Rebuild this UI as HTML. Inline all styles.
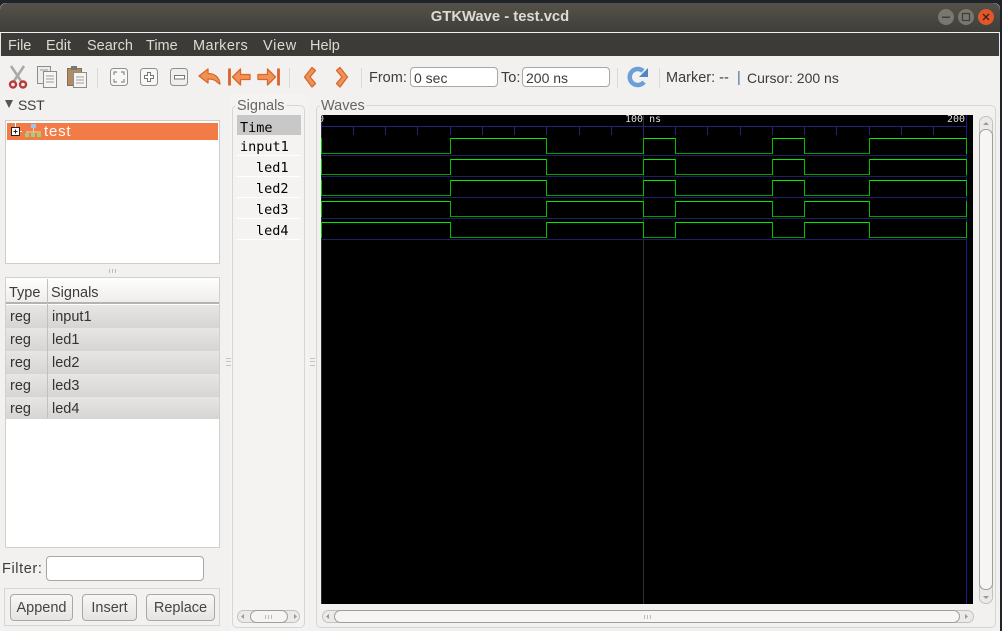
<!DOCTYPE html>
<html><head><meta charset="utf-8"><style>
html,body{margin:0;padding:0;background:#20232a;}
body{width:1002px;height:631px;overflow:hidden;position:relative;font-family:"Liberation Sans",sans-serif;font-size:14.5px;color:#3c3c3c;}
.a{position:absolute;box-sizing:border-box;}
.t{position:absolute;white-space:nowrap;line-height:18px;}
.m{font-family:"DejaVu Sans Mono","Liberation Mono",monospace;color:#000;font-size:13.5px;}
.menu{color:#dfdbd2;top:37px;font-size:14.5px;}
.frame{border:1px solid #d8d6d3;border-radius:5px;}
.entry{background:#fff;border:1px solid #a9a7a3;border-radius:4px;}
.btn{border:1px solid #aaa8a4;border-radius:4px;background:linear-gradient(#f8f7f6,#e6e4e1);text-align:center;line-height:26px;height:27px;top:594px;color:#444;}
.row{left:6px;width:213px;height:23px;background:linear-gradient(#e7e6e4,#d6d5d3);}
.cell{color:#333;font-size:14.5px;}
.h3{border-top:1px solid #c4c4c4;border-bottom:1px solid #c4c4c4;}
</style></head><body>
<div class="a" style="left:0;top:3px;width:1000px;height:628px;background:#f2f1f0;border-radius:6px 6px 0 0;"></div>
<div class="a" style="left:0;top:3px;width:1000px;height:30px;background:linear-gradient(#55524a,#3f3e39);border-radius:7px 7px 0 0;border-bottom:1px solid #f0f0f0;"></div>
<div class="t" style="left:420px;top:8px;color:#dfdbd2;font-weight:bold;font-size:14.8px;width:160px;text-align:center;">GTKWave - test.vcd</div>
<svg class="a" style="left:930px;top:6px" width="70" height="22">
<circle cx="16" cy="11" r="8" fill="#79776f"/><rect x="12" y="10.5" width="8" height="1.5" fill="#3f3e39"/>
<circle cx="36" cy="11" r="8" fill="#79776f"/><rect x="32.5" y="7.5" width="7" height="7" fill="none" stroke="#3f3e39" stroke-width="1.2"/>
<circle cx="56" cy="11" r="8" fill="#e2572a"/><path d="M53 8l6 6M59 8l-6 6" stroke="#402015" stroke-width="1.3"/>
</svg>
<div class="a" style="left:0;top:33px;width:1000px;height:23px;background:#3c3b37;border-left:1px solid #e8e8e8;border-right:1px solid #e8e8e8;"></div>
<span class="t menu" style="left:8px">File</span><span class="t menu" style="left:46px">Edit</span><span class="t menu" style="left:87px">Search</span><span class="t menu" style="left:146px">Time</span><span class="t menu" style="left:193px;letter-spacing:.4px">Markers</span><span class="t menu" style="left:263px;letter-spacing:.7px">View</span><span class="t menu" style="left:310px">Help</span>

<svg class="a" style="left:0;top:60px" width="370" height="35" fill="none">
<path d="M11 6l10 15M24 6l-10 15" stroke="#a9a9a7" stroke-width="2.6"/>
<circle cx="13" cy="24.500" r="3" stroke="#b93a3a" stroke-width="2.4"/><circle cx="23" cy="24.500" r="3" stroke="#b93a3a" stroke-width="2.4"/>
<rect x="37.500" y="6.500" width="13" height="17" fill="#ececeb" stroke="#8c8c8a"/><rect x="43.500" y="11.500" width="13" height="16" fill="#f4f4f3" stroke="#8c8c8a"/>
<path d="M46 16h8M46 19h8M46 22h8M40 10h8" stroke="#9b9b99"/>
<rect x="67.500" y="8.500" width="14" height="17" fill="#b08c63" stroke="#8a6c4a"/><rect x="71" y="6" width="6" height="4" fill="#777"/>
<rect x="73.500" y="12.500" width="13" height="15" fill="#f4f4f3" stroke="#8c8c8a"/><path d="M76 17h8M76 20h8M76 23h8" stroke="#9b9b99"/>
<path d="M97.500 8v20" stroke="#dcdad7"/>
<rect x="110.500" y="8.500" width="17" height="17" rx="3" fill="#f7f7f6" stroke="#8f8f8d"/>
<path d="M114 15v-3h3M124 15v-3h-3M114 19v3h3M124 19v3h-3" stroke="#8b8b89" stroke-width="1.200"/>
<rect x="140.500" y="8.500" width="17" height="17" rx="3" fill="#f7f7f6" stroke="#8f8f8d"/>
<path d="M147.500 12.500h3v3h3v3h-3v3h-3v-3h-3v-3h3z" fill="#fff" stroke="#777"/>
<rect x="170.500" y="8.500" width="17" height="17" rx="3" fill="#efefee" stroke="#8f8f8d"/>
<rect x="174.500" y="15.500" width="10" height="3.500" fill="#fff" stroke="#777"/>
<path d="M199 16l9-7v4.500c6 0 11 3 12 10.500-2-1-4-3-4-3-2-1.500-4-2-8-2v4z" fill="#ee9355" stroke="#d9662a" stroke-width="1.300" stroke-linejoin="round"/>
<path d="M229.500 8.500v17" stroke="#d8642a" stroke-width="2.800"/><path d="M232.500 17l8-8v5.500h9.500v5h-9.500v5.500z" fill="#ee9355" stroke="#d9662a" stroke-width="1.300" stroke-linejoin="round"/>
<path d="M278.500 8.500v17" stroke="#d8642a" stroke-width="2.800"/><path d="M275.500 17l-8-8v5.500h-9.500v5h9.500v5.500z" fill="#ee9355" stroke="#d9662a" stroke-width="1.300" stroke-linejoin="round"/>
<path d="M289.500 8v20" stroke="#dcdad7"/>
<path d="M304.500 17L312 7.500l3.500 3L310 17l5.500 6.500-3.500 3.500z" fill="#ee9355" stroke="#d9662a" stroke-width="1.300" stroke-linejoin="round"/>
<path d="M347.500 17L340 7.500l-3.500 3L342 17l-5.500 6.500 3.500 3.500z" fill="#ee9355" stroke="#d9662a" stroke-width="1.300" stroke-linejoin="round"/>
<path d="M361.500 8v20" stroke="#dcdad7"/>
</svg>
<span class="t" style="left:369px;top:69px">From:</span>
<div class="a entry" style="left:410px;top:67px;width:88px;height:20px;"></div><span class="t" style="left:414px;top:69px;font-size:14px">0 sec</span>
<span class="t" style="left:501px;top:69px">To:</span>
<div class="a entry" style="left:522px;top:67px;width:88px;height:20px;"></div><span class="t" style="left:526px;top:69px;font-size:14px">200 ns</span>
<svg class="a" style="left:617px;top:60px" width="45" height="35" fill="none">
<path d="M.5 8v20" stroke="#dcdad7"/>
<path d="M27 22a8 8 0 1 1-1-11" stroke="#6a9fd8" stroke-width="4.500"/><path d="M31 8v9h-9z" fill="#4f86c6"/>
<path d="M42.500 8v20" stroke="#dcdad7"/>
</svg>
<span class="t" style="left:666px;top:69px">Marker: --</span>
<span class="t" style="left:737px;top:69px;color:#4f6f99">|</span>
<span class="t" style="left:747px;top:68.500px;font-size:14px">Cursor: 200 ns</span>

<svg class="a" style="left:5px;top:100px" width="9" height="9"><path d="M0 0h8l-4 8z" fill="#555"/></svg>
<span class="t" style="left:18px;top:96px;font-size:14px;letter-spacing:-.3px">SST</span>
<div class="a" style="left:5px;top:120px;width:215px;height:144px;background:#fff;border:1px solid #cfcdca;"></div>
<div class="a" style="left:7px;top:123px;width:211px;height:17px;background:#f27b46;"></div>
<svg class="a" style="left:9px;top:123px" width="36" height="17">
<rect x="2.500" y="4.500" width="8" height="8" fill="#fff" stroke="#222"/><path d="M4.500 8.500h4M6.500 6.500v4" stroke="#222"/>
<path d="M6.500 0v4M11 8.500h2" stroke="#fff"/>
<rect x="22" y="1" width="5" height="4" fill="#9cc4ea"/><path d="M17 9h15M24.500 5v4" stroke="#f7d0ba"/>
<rect x="16" y="10" width="4" height="4" fill="#9ad17a"/><rect x="22" y="10" width="4" height="4" fill="#9ad17a"/><rect x="28" y="10" width="4" height="4" fill="#9ad17a"/>
</svg>
<span class="t" style="left:44px;top:123px;color:#fff;font-size:15px;letter-spacing:.8px">test</span>
<div class="a" style="left:109px;top:269px;width:1px;height:4px;background:#bbb;"></div><div class="a" style="left:112px;top:269px;width:1px;height:4px;background:#bbb;"></div><div class="a" style="left:115px;top:269px;width:1px;height:4px;background:#bbb;"></div>

<div class="a" style="left:5px;top:277px;width:215px;height:271px;background:#fff;border:1px solid #d2d0cd;"></div>
<div class="a" style="left:6px;top:278px;width:213px;height:26px;background:linear-gradient(#fff,#eeedeb);border-bottom:2px solid #b5b3b0;"></div>
<div class="a" style="left:47px;top:279px;width:1px;height:139px;background:#c2c0bd;z-index:2;"></div>
<span class="t" style="left:9px;top:284px">Type</span><span class="t" style="left:51px;top:284px">Signals</span>
<div class="a row" style="top:305px"></div><div class="a row" style="top:328px"></div><div class="a row" style="top:351px"></div><div class="a row" style="top:374px"></div><div class="a row" style="top:397px;height:22px"></div>
<span class="t cell" style="left:10px;top:308px">reg</span><span class="t cell" style="left:52px;top:308px">input1</span>
<span class="t cell" style="left:10px;top:331px">reg</span><span class="t cell" style="left:52px;top:331px">led1</span>
<span class="t cell" style="left:10px;top:354px">reg</span><span class="t cell" style="left:52px;top:354px">led2</span>
<span class="t cell" style="left:10px;top:377px">reg</span><span class="t cell" style="left:52px;top:377px">led3</span>
<span class="t cell" style="left:10px;top:400px">reg</span><span class="t cell" style="left:52px;top:400px">led4</span>

<span class="t" style="left:2px;top:560px;letter-spacing:.6px">Filter:</span>
<div class="a entry" style="left:46px;top:556px;width:158px;height:25px;"></div>
<div class="a" style="left:4px;top:588px;width:216px;height:38px;border:1px solid #d8d6d3;"></div>
<div class="a btn" style="left:10px;width:63px;">Append</div>
<div class="a btn" style="left:82px;width:55px;">Insert</div>
<div class="a btn" style="left:146px;width:69px;">Replace</div>

<div class="a" style="left:230px;top:94px;width:78px;height:537px;background:#f4f3f2;"></div>
<div class="a frame" style="left:232px;top:105px;width:73px;height:523px;"></div>
<div class="a" style="left:236px;top:98px;width:50px;height:14px;background:#f4f3f2;"></div>
<span class="t" style="left:237px;top:97px;color:#666;">Signals</span>
<div class="a" style="left:237px;top:115px;width:64px;height:20px;background:#c8c8c8;"></div>
<span class="t m" style="left:240px;top:119px">Time</span>
<span class="t m" style="left:240px;top:138px">input1</span>
<span class="t m" style="left:256px;top:159px">led1</span>
<span class="t m" style="left:256px;top:180px">led2</span>
<span class="t m" style="left:256px;top:201px">led3</span>
<span class="t m" style="left:256px;top:222px">led4</span>
<div class="a" style="left:237px;top:155px;width:64px;height:1px;background:#fff;"></div><div class="a" style="left:237px;top:176px;width:64px;height:1px;background:#fff;"></div><div class="a" style="left:237px;top:197px;width:64px;height:1px;background:#fff;"></div><div class="a" style="left:237px;top:218px;width:64px;height:1px;background:#fff;"></div><div class="a" style="left:237px;top:239px;width:64px;height:1px;background:#fff;"></div>
<svg class="a" style="left:236px;top:609px" width="66" height="15" fill="none">
<rect x="1.500" y="1.500" width="62" height="12" rx="6" fill="#eceae8" stroke="#c4c2bf"/>
<rect x="14.500" y="1.500" width="37" height="12" rx="6" fill="#f5f4f3" stroke="#a09e9b"/>
<path d="M8 5v5l-3-2.500zM58 5v5l3-2.500z" fill="#999"/><path d="M29.500 6v4M32.500 6v4M35.500 6v4" stroke="#bbb"/>
</svg>
<div class="a h3" style="left:226px;top:358px;width:5px;height:8px;"></div>
<div class="a" style="left:226px;top:361px;width:5px;height:1px;background:#c4c4c4;"></div>
<div class="a h3" style="left:310px;top:358px;width:5px;height:8px;"></div>
<div class="a" style="left:310px;top:361px;width:5px;height:1px;background:#c4c4c4;"></div>

<div class="a frame" style="left:316px;top:105px;width:680px;height:523px;"></div>
<div class="a" style="left:320px;top:98px;width:46px;height:14px;background:#f2f1f0;"></div>
<span class="t" style="left:321px;top:97px;color:#666;">Waves</span>

<svg class="a" style="left:321px;top:115px" width="652" height="489" viewBox="321 115 652 489" fill="none" shape-rendering="crispEdges">
<rect x="321" y="115" width="652" height="489" fill="#000"/>
<path d="M321.500 115v489M643.500 115v489" stroke="#2e2e3a"/>
<path d="M966.500 115v489" stroke="#1c1c8c"/>
<path d="M321 126.500h646" stroke="#24247e"/>
<path d="M353.500 127v8M385.500 127v8M417.500 127v8M450.500 127v8M482.500 127v8M514.500 127v8M546.500 127v8M579.500 127v8M611.500 127v8M643.500 127v8M675.500 127v8M707.500 127v8M740.500 127v8M772.500 127v8M804.500 127v8M836.500 127v8M869.500 127v8M901.500 127v8M933.500 127v8" stroke="#24247e"/>
<path d="M321 155.500h646M321 176.500h646M321 197.500h646M321 218.500h646M321 239.500h646" stroke="#1f1f66"/>
<g stroke="#00a000">
<path d="M321 153.500h129M547 153.500h96M676 153.500h96M805 153.500h64"/>
<path d="M321 174.500h129M547 174.500h96M676 174.500h96M805 174.500h64"/>
<path d="M321 195.500h129M547 195.500h96M676 195.500h96M805 195.500h64"/>
<path d="M451 216.500h95M644 216.500h31M773 216.500h31M870 216.500h97"/>
<path d="M451 237.500h95M644 237.500h31M773 237.500h31M870 237.500h97"/>
</g>
<g stroke="#00ec00">
<path d="M450 138.500h97M643 138.500h33M772 138.500h33M869 138.500h98"/>
<path d="M450 159.500h97M643 159.500h33M772 159.500h33M869 159.500h98"/>
<path d="M450 180.500h97M643 180.500h33M772 180.500h33M869 180.500h98"/>
<path d="M321 201.500h130M546 201.500h98M675 201.500h98M804 201.500h66"/>
<path d="M321 222.500h130M546 222.500h98M675 222.500h98M804 222.500h66"/>
</g>
<g stroke="#00c000">
<path d="M450.500 138v16M546.500 138v16M643.500 138v16M675.500 138v16M772.500 138v16M804.500 138v16M869.500 138v16M966.500 138v16M321.500 138v16"/>
<path d="M450.500 159v16M546.500 159v16M643.500 159v16M675.500 159v16M772.500 159v16M804.500 159v16M869.500 159v16M966.500 159v16M321.500 159v16"/>
<path d="M450.500 180v16M546.500 180v16M643.500 180v16M675.500 180v16M772.500 180v16M804.500 180v16M869.500 180v16M966.500 180v16M321.500 180v16"/>
<path d="M450.500 201v16M546.500 201v16M643.500 201v16M675.500 201v16M772.500 201v16M804.500 201v16M869.500 201v16M966.500 201v16M321.500 201v16"/>
<path d="M450.500 222v16M546.500 222v16M643.500 222v16M675.500 222v16M772.500 222v16M804.500 222v16M869.500 222v16M966.500 222v16M321.500 222v16"/>
</g>
</svg>
<div class="a" style="left:321px;top:115px;width:4px;height:10px;overflow:hidden;"><span class="t" style="left:-3px;top:-4px;font-family:'DejaVu Sans Mono',monospace;font-size:10px;color:#dddddd;">0</span></div>
<span class="t" style="left:625px;top:111px;font-family:'DejaVu Sans Mono',monospace;font-size:10px;color:#dddddd;">100 ns</span>
<span class="t" style="left:947px;top:111px;font-family:'DejaVu Sans Mono',monospace;font-size:10px;color:#dddddd;">200</span>

<svg class="a" style="left:976px;top:113px" width="20" height="495" fill="none">
<rect x="3.500" y="3.500" width="13" height="487" rx="6" fill="#eceae8" stroke="#c4c2bf"/>
<rect x="3.500" y="16.500" width="13" height="460" rx="6" fill="#f6f5f4" stroke="#9f9d9a"/>
<path d="M7 12h6l-3-3zM7 483h6l-3 3z" fill="#999"/>
</svg>
<svg class="a" style="left:321px;top:609px" width="654" height="15" fill="none">
<rect x="1.500" y="1.500" width="651" height="12" rx="6" fill="#eceae8" stroke="#c4c2bf"/>
<rect x="13.500" y="1.500" width="625" height="12" rx="6" fill="#f6f5f4" stroke="#9f9d9a"/>
<path d="M8 5v5l-3-2.500zM644 5v5l3-2.500z" fill="#999"/>
<path d="M323.500 6v4M326.500 6v4M329.500 6v4" stroke="#bbb"/>
</svg>
</body></html>
